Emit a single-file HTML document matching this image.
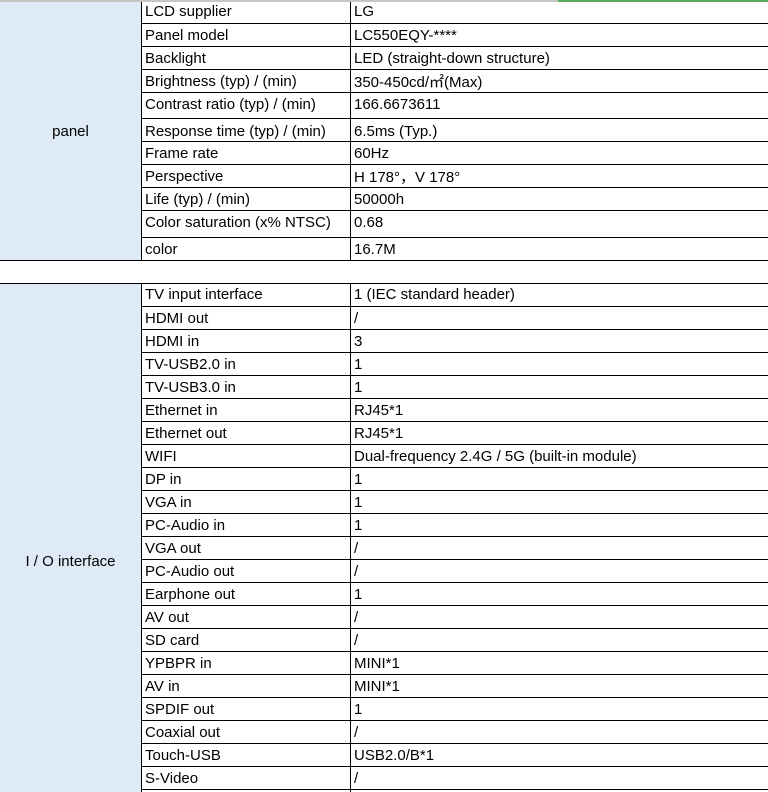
<!DOCTYPE html>
<html><head><meta charset="utf-8"><style>
*{margin:0;padding:0;box-sizing:border-box}
body{width:768px;height:792px;overflow:hidden;background:#fff;font-family:"Liberation Sans","DejaVu Sans",sans-serif;font-size:15px;color:#000;position:relative}
.top{position:absolute;left:0;top:0;width:768px;height:2px;background:#c6c6c6}
.green{position:absolute;left:558px;top:0;width:210px;height:2px;background:#5aa85a}
.lbl{position:absolute;left:0;width:141px;background:#deeaf6;display:flex;align-items:center;justify-content:center}
.r{position:absolute;left:141px;width:627px;border-top:1px solid #000}
.r span{position:absolute;top:0;bottom:0;display:flex;align-items:center;white-space:nowrap}
.a{left:4px}.b{left:213px}
.v{position:absolute;width:1px;background:#000}
.h{position:absolute;left:0;width:768px;height:1px;background:#000}
</style></head><body>
<div class="top"></div><div class="green"></div>
<div class="lbl" style="top:2px;height:258px">panel</div>
<div class="lbl" style="top:284px;height:508px"><span style="position:relative;top:23px">I / O interface</span></div>

<div class="r" style="top:0;height:23px;border-top:none"><span class="a">LCD supplier</span><span class="b">LG</span></div>
<div class="r" style="top:23px;height:23px"><span class="a">Panel model</span><span class="b">LC550EQY-****</span></div>
<div class="r" style="top:46px;height:23px"><span class="a">Backlight</span><span class="b">LED (straight-down structure)</span></div>
<div class="r" style="top:69px;height:23px"><span class="a">Brightness (typ) / (min)</span><span class="b">350-450cd/㎡(Max)</span></div>
<div class="r" style="top:92px;height:26px"><span class="a" style="bottom:3px">Contrast ratio (typ) / (min)</span><span class="b" style="bottom:3px">166.6673611</span></div>
<div class="r" style="top:118px;height:23px"><span class="a" style="top:3px">Response time (typ) / (min)</span><span class="b" style="top:3px">6.5ms (Typ.)</span></div>
<div class="r" style="top:141px;height:23px"><span class="a">Frame rate</span><span class="b">60Hz</span></div>
<div class="r" style="top:164px;height:23px"><span class="a">Perspective</span><span class="b">H 178°，V 178°</span></div>
<div class="r" style="top:187px;height:23px"><span class="a">Life (typ) / (min)</span><span class="b">50000h</span></div>
<div class="r" style="top:210px;height:27px"><span class="a" style="bottom:3px">Color saturation (x% NTSC)</span><span class="b" style="bottom:3px">0.68</span></div>
<div class="r" style="top:237px;height:23px"><span class="a">color</span><span class="b">16.7M</span></div>
<div class="h" style="top:260px"></div>
<div class="h" style="top:283px"></div>

<div class="r" style="top:283px;height:23px;border-top:none"><span class="a">TV input interface</span><span class="b">1 (IEC standard header)</span></div>
<div class="r" style="top:306px;height:23px"><span class="a">HDMI out</span><span class="b">/</span></div>
<div class="r" style="top:329px;height:23px"><span class="a">HDMI in</span><span class="b">3</span></div>
<div class="r" style="top:352px;height:23px"><span class="a">TV-USB2.0 in</span><span class="b">1</span></div>
<div class="r" style="top:375px;height:23px"><span class="a">TV-USB3.0 in</span><span class="b">1</span></div>
<div class="r" style="top:398px;height:23px"><span class="a">Ethernet in</span><span class="b">RJ45*1</span></div>
<div class="r" style="top:421px;height:23px"><span class="a">Ethernet out</span><span class="b">RJ45*1</span></div>
<div class="r" style="top:444px;height:23px"><span class="a">WIFI</span><span class="b">Dual-frequency 2.4G / 5G (built-in module)</span></div>
<div class="r" style="top:467px;height:23px"><span class="a">DP in</span><span class="b">1</span></div>
<div class="r" style="top:490px;height:23px"><span class="a">VGA in</span><span class="b">1</span></div>
<div class="r" style="top:513px;height:23px"><span class="a">PC-Audio in</span><span class="b">1</span></div>
<div class="r" style="top:536px;height:23px"><span class="a">VGA out</span><span class="b">/</span></div>
<div class="r" style="top:559px;height:23px"><span class="a">PC-Audio out</span><span class="b">/</span></div>
<div class="r" style="top:582px;height:23px"><span class="a">Earphone out</span><span class="b">1</span></div>
<div class="r" style="top:605px;height:23px"><span class="a">AV out</span><span class="b">/</span></div>
<div class="r" style="top:628px;height:23px"><span class="a">SD card</span><span class="b">/</span></div>
<div class="r" style="top:651px;height:23px"><span class="a">YPBPR in</span><span class="b">MINI*1</span></div>
<div class="r" style="top:674px;height:23px"><span class="a">AV in</span><span class="b">MINI*1</span></div>
<div class="r" style="top:697px;height:23px"><span class="a">SPDIF out</span><span class="b">1</span></div>
<div class="r" style="top:720px;height:23px"><span class="a">Coaxial out</span><span class="b">/</span></div>
<div class="r" style="top:743px;height:23px"><span class="a">Touch-USB</span><span class="b">USB2.0/B*1</span></div>
<div class="r" style="top:766px;height:23px"><span class="a">S-Video</span><span class="b">/</span></div>
<div class="r" style="top:789px;height:3px"></div>

<div class="v" style="left:141px;top:2px;height:258px"></div>
<div class="v" style="left:350px;top:2px;height:258px"></div>
<div class="v" style="left:141px;top:283px;height:509px"></div>
<div class="v" style="left:350px;top:283px;height:509px"></div>
</body></html>
